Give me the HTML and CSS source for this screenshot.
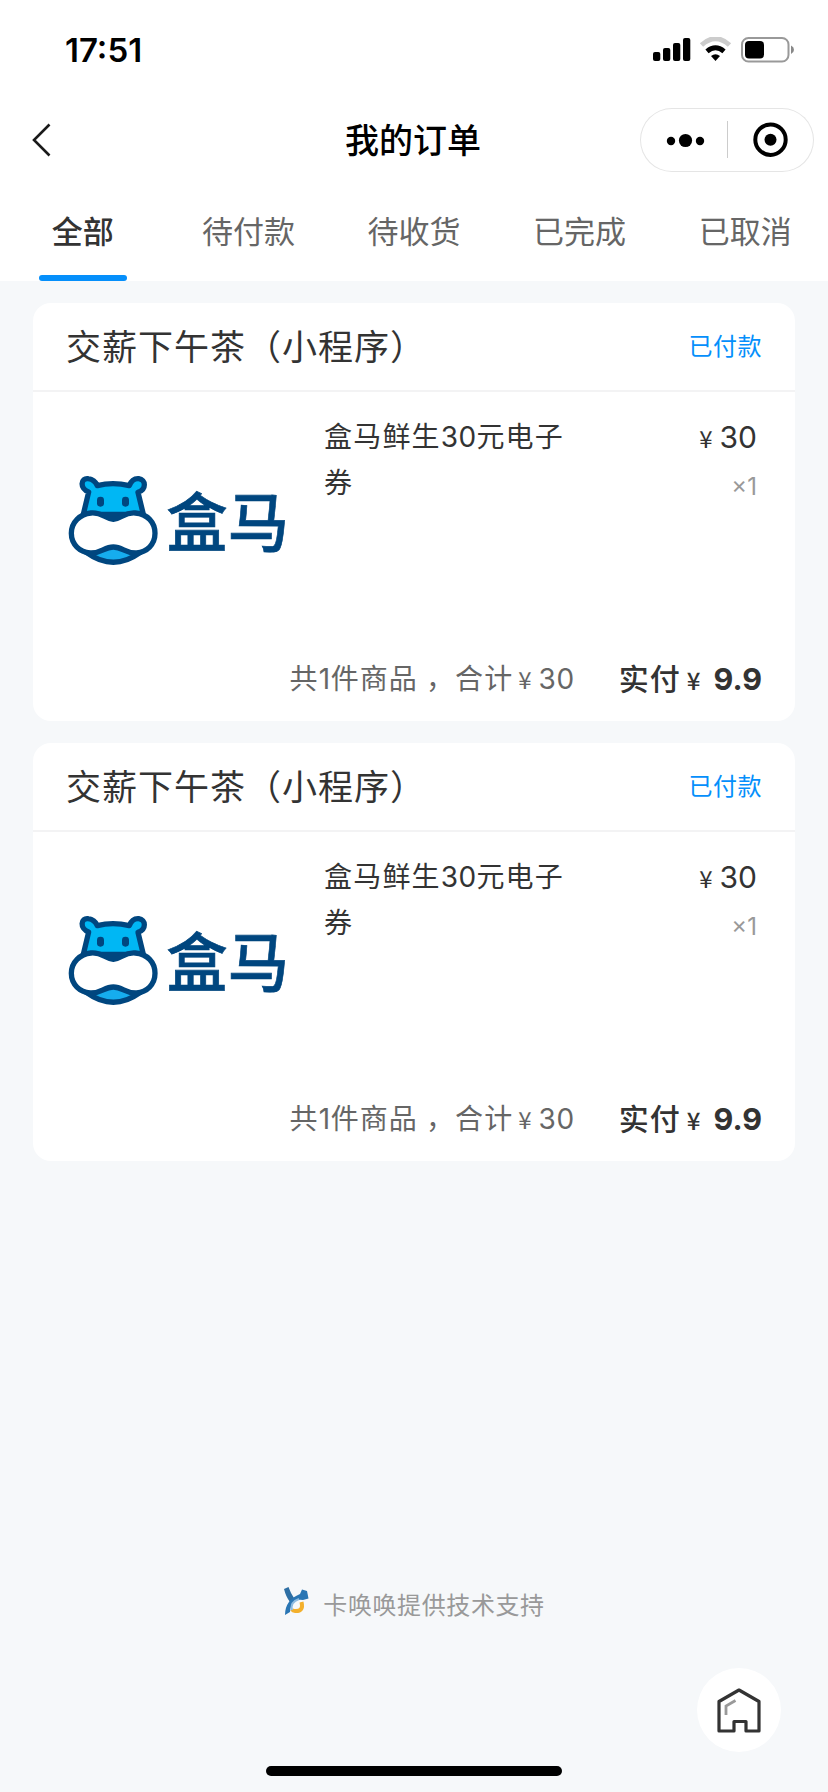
FILE: index.html
```html
<!DOCTYPE html>
<html lang="zh-CN">
<head>
<meta charset="utf-8">
<title>我的订单</title>
<link rel="stylesheet" href="styles.css">
</head>
<body>
<svg class="defs" width="0" height="0" aria-hidden="true">
  <symbol id="hippo" viewBox="0 0 720 360">
    <g stroke="#00467f" stroke-width="16" stroke-linejoin="round" stroke-linecap="round">
      <path d="M70 163 L86 96 C58 86 62 52 85 56 C100 58 108 68 112 77 Q158 65 208 77 C213 64 222 55 236 56 C258 59 260 88 234 97 L250 163 Z" fill="#00b7f4"/>
      <path d="M80 278 Q160 336 240 278 L160 255 Z" fill="#16adee"/>
      <path d="M160 178 C186 176 192 156 226 159 C262 162 285 187 285 220 C285 254 260 276 230 279 C195 281 189 261 160 261 C131 261 125 281 90 279 C60 276 34 254 34 220 C34 187 60 162 93 159 C127 156 134 176 160 178 Z" fill="#fff"/>
    </g>
    <rect x="111" y="110" width="21" height="30" rx="10" fill="#00467f"/>
    <rect x="186" y="110" width="21" height="30" rx="10" fill="#00467f"/>
  </symbol>
</svg>

<header class="top">
  <div class="status-bar">
    <span class="time">17:51</span>
    <svg class="indicators" width="142" height="26" viewBox="0 0 142 26">
      <rect x="0" y="15" width="7.3" height="9" rx="2"/>
      <rect x="10" y="11" width="7.3" height="13" rx="2"/>
      <rect x="20" y="6" width="7.3" height="18" rx="2"/>
      <rect x="30" y="1" width="7.3" height="23" rx="2"/>
      <path d="M48.500 8 Q62.500 -4.500 76.500 8" fill="none" stroke="#ccc" stroke-width="5"/>
      <path d="M54 14.300 Q62.500 7.200 71 14.300" fill="none" stroke="#000" stroke-width="5"/>
      <path d="M58 19 Q62.500 15.500 67 19 L62.500 24 Z"/>
      <rect x="89" y="1" width="46.500" height="23.500" rx="6.500" fill="none" stroke="#999" stroke-width="2"/>
      <rect x="92" y="4" width="19" height="17.500" rx="4"/>
      <path d="M138 8.500 Q141 10 141 12.700 Q141 15.500 138 17 Z" fill="#888"/>
    </svg>
  </div>
  <div class="nav">
    <svg class="back" width="24" height="36" viewBox="0 0 24 36"><path d="M19.500 2.500 L4 18 L19.500 33.500" fill="none" stroke="#1a1a1a" stroke-width="2.600"/></svg>
    <h1 class="title">我的订单</h1>
    <div class="capsule">
      <svg width="174" height="64" viewBox="0 0 174 64">
        <circle cx="31" cy="33" r="4.200"/><circle cx="45.500" cy="32.500" r="6.600"/><circle cx="60" cy="33" r="4.200"/>
        <path d="M87.500 13 V50" stroke="#ccc"/>
        <circle cx="130.500" cy="31.700" r="15.200" fill="none" stroke="#000" stroke-width="4"/>
        <circle cx="130.500" cy="31.700" r="6"/>
      </svg>
    </div>
  </div>
  <nav class="tabs">
    <span class="tab active">全部</span>
    <span class="tab">待付款</span>
    <span class="tab">待收货</span>
    <span class="tab">已完成</span>
    <span class="tab">已取消</span>
  </nav>
</header>

<main class="orders">
  <article class="card">
    <div class="card-head"><span class="shop">交薪下午茶（小程序）</span><span class="state">已付款</span></div>
    <div class="goods">
      <svg class="thumb" width="240" height="120" viewBox="0 0 720 360"><use href="#hippo"/><text class="brand-name" x="319" y="259" textLength="368" lengthAdjust="spacingAndGlyphs">盒马</text></svg>
      <p class="name">盒马鲜生<span class="num">30</span>元电子券</p>
      <div class="cost"><span class="price"><span class="yen">¥</span>30</span><span class="qty">×1</span></div>
    </div>
    <div class="card-foot">
      <span class="total">共<span class="num">1</span>件商品<span class="comma">，</span>合计<span class="yen">¥</span><span class="num">30</span></span>
      <span class="paid">实付<span class="yen">¥</span><span class="amount">9.9</span></span>
    </div>
  </article>
  <article class="card">
    <div class="card-head"><span class="shop">交薪下午茶（小程序）</span><span class="state">已付款</span></div>
    <div class="goods">
      <svg class="thumb" width="240" height="120" viewBox="0 0 720 360"><use href="#hippo"/><text class="brand-name" x="319" y="259" textLength="368" lengthAdjust="spacingAndGlyphs">盒马</text></svg>
      <p class="name">盒马鲜生<span class="num">30</span>元电子券</p>
      <div class="cost"><span class="price"><span class="yen">¥</span>30</span><span class="qty">×1</span></div>
    </div>
    <div class="card-foot">
      <span class="total">共<span class="num">1</span>件商品<span class="comma">，</span>合计<span class="yen">¥</span><span class="num">30</span></span>
      <span class="paid">实付<span class="yen">¥</span><span class="amount">9.9</span></span>
    </div>
  </article>
</main>

<footer class="bottom">
  <div class="support">
    <svg width="28" height="32" viewBox="0 0 28 32">
      <path d="M18.500 16 Q21 25.500 12 25 Q10 25 9 23.500" fill="none" stroke="#f3b02c" stroke-width="4"/>
      <path d="M1 3 L5.500 1 Q8 8 11 12 L7 16 Q3 11 1 3" fill="#2e6fa4"/>
      <path d="M2 29 Q2 14 17 8 L19 3.500 L24 5 L25.500 12.500 L20 14 Q8 12 7 26 Z" fill="#2a76b4"/>
      <path d="M9 24 Q7 16 16 13" fill="none" stroke="#8ebbe0" stroke-width="2"/>
    </svg>
    <span>卡唤唤提供技术支持</span>
  </div>
  <div class="home">
    <svg width="84" height="84" viewBox="0 0 84 84" fill="none">
      <path d="M22 63 V33.500 L42 22 L62 33.500 V63 H49 V53.500 H37 V63 Z" stroke="#333" stroke-width="3.200" stroke-linejoin="round"/>
      <path d="M29 47 V38 L38.500 32.500" stroke="#999" stroke-width="2.800"/>
    </svg>
  </div>
  <div class="home-bar"></div>
</footer>
</body>
</html>
```
FILE: styles.css
```css
* { box-sizing: border-box; margin: 0; padding: 0; }

body {
  width: 828px;
  height: 1792px;
  display: flex;
  flex-direction: column;
  background: #f6f8fa;
  color: #333;
  font-family: "Noto Sans CJK SC", sans-serif;
  overflow: hidden;
}

svg { display: block; }
.defs { position: absolute; }
.brand-name { font-size: 192px; font-weight: 500; fill: #00467f; stroke: #00467f; stroke-width: 2; }

.top { height: 281px; background: #fff; }

.status-bar {
  height: 100px;
  padding: 0 33px 0 65px;
  display: flex;
  justify-content: space-between;
  align-items: center;
}
.time { font: 600 33px/40px Inter, sans-serif; color: #000; }

.nav {
  height: 80px;
  padding: 0 14px 0 30px;
  display: grid;
  grid-template-columns: 174px 1fr 174px;
  align-items: center;
}
.title { font-size: 34px; line-height: 50px; font-weight: 500; color: #000; text-align: center; padding: 0 18px 3px 0; }
.capsule { width: 174px; height: 64px; border-radius: 32px; box-shadow: inset 0 0 0 1px #e5e5e5; }

.tabs { height: 101px; display: grid; grid-template-columns: repeat(5, 1fr); }
.tab {
  display: flex;
  flex-direction: column;
  align-items: center;
  padding-top: 27px;
  font-size: 31px;
  line-height: 46px;
  color: #666;
}
.tab.active { font-weight: 500; color: #333; }
.tab.active::after { content: ""; width: 88px; height: 6px; margin-top: 22px; border-radius: 3px; background: #058ffb; }

.orders { padding: 22px 33px 0; display: flex; flex-direction: column; gap: 22px; }
.card { height: 418px; border-radius: 18px; background: #fff; display: flex; flex-direction: column; }
.card-head {
  height: 89px;
  padding: 0 33px 4px;
  display: flex;
  justify-content: space-between;
  align-items: center;
  border-bottom: 2px solid #f3f3f4;
}
.shop { font-size: 35px; letter-spacing: 1px; }
.state { font-size: 24px; letter-spacing: .5px; color: #058ffb; }

.goods { height: 245px; padding: 20px 38px 0 27px; display: flex; }
.thumb { margin-top: 48px; }
.name { width: 252px; margin-left: 24px; font-size: 28px; line-height: 46px; letter-spacing: 1.2px; }
.num { font-family: Inter, sans-serif; line-height: 1; letter-spacing: .3px; }
.cost { flex: 1; padding-top: 1px; display: flex; flex-direction: column; align-items: flex-end; }
.price { font: 400 30px/48px Inter, sans-serif; }
.qty { font: 400 24px/52px Inter, sans-serif; color: #999; }
.yen { font-family: "Noto Sans CJK SC", sans-serif; font-size: 24px; line-height: 1; }
.price .yen { margin-right: 7px; }

.card-foot { height: 84px; padding: 0 33px 4px; display: flex; justify-content: flex-end; align-items: center; gap: 44px; line-height: 46px; }
.total { font-size: 28px; letter-spacing: 1.1px; color: #666; }
.total .num { letter-spacing: .6px; }
.comma { margin-left: 8px; }
.total .yen { margin: 0 7px 0 5px; letter-spacing: 0; }
.paid { font-size: 30px; font-weight: 500; letter-spacing: 1px; }
.paid .yen { margin: 0 13px 0 6px; letter-spacing: 0; }
.amount { font: 700 30.5px/1 Inter, sans-serif; letter-spacing: 0; }

.bottom { flex: 1; display: flex; flex-direction: column; align-items: center; justify-content: flex-end; }
.support { display: flex; gap: 12px; color: #999; font-size: 24px; line-height: 36px; letter-spacing: .6px; }
.home { align-self: flex-end; width: 84px; height: 84px; margin: 46px 47px 14px 0; border-radius: 50%; background: #fff; }
.home-bar { width: 296px; height: 10px; margin-bottom: 16px; border-radius: 5px; background: #000; }
```
